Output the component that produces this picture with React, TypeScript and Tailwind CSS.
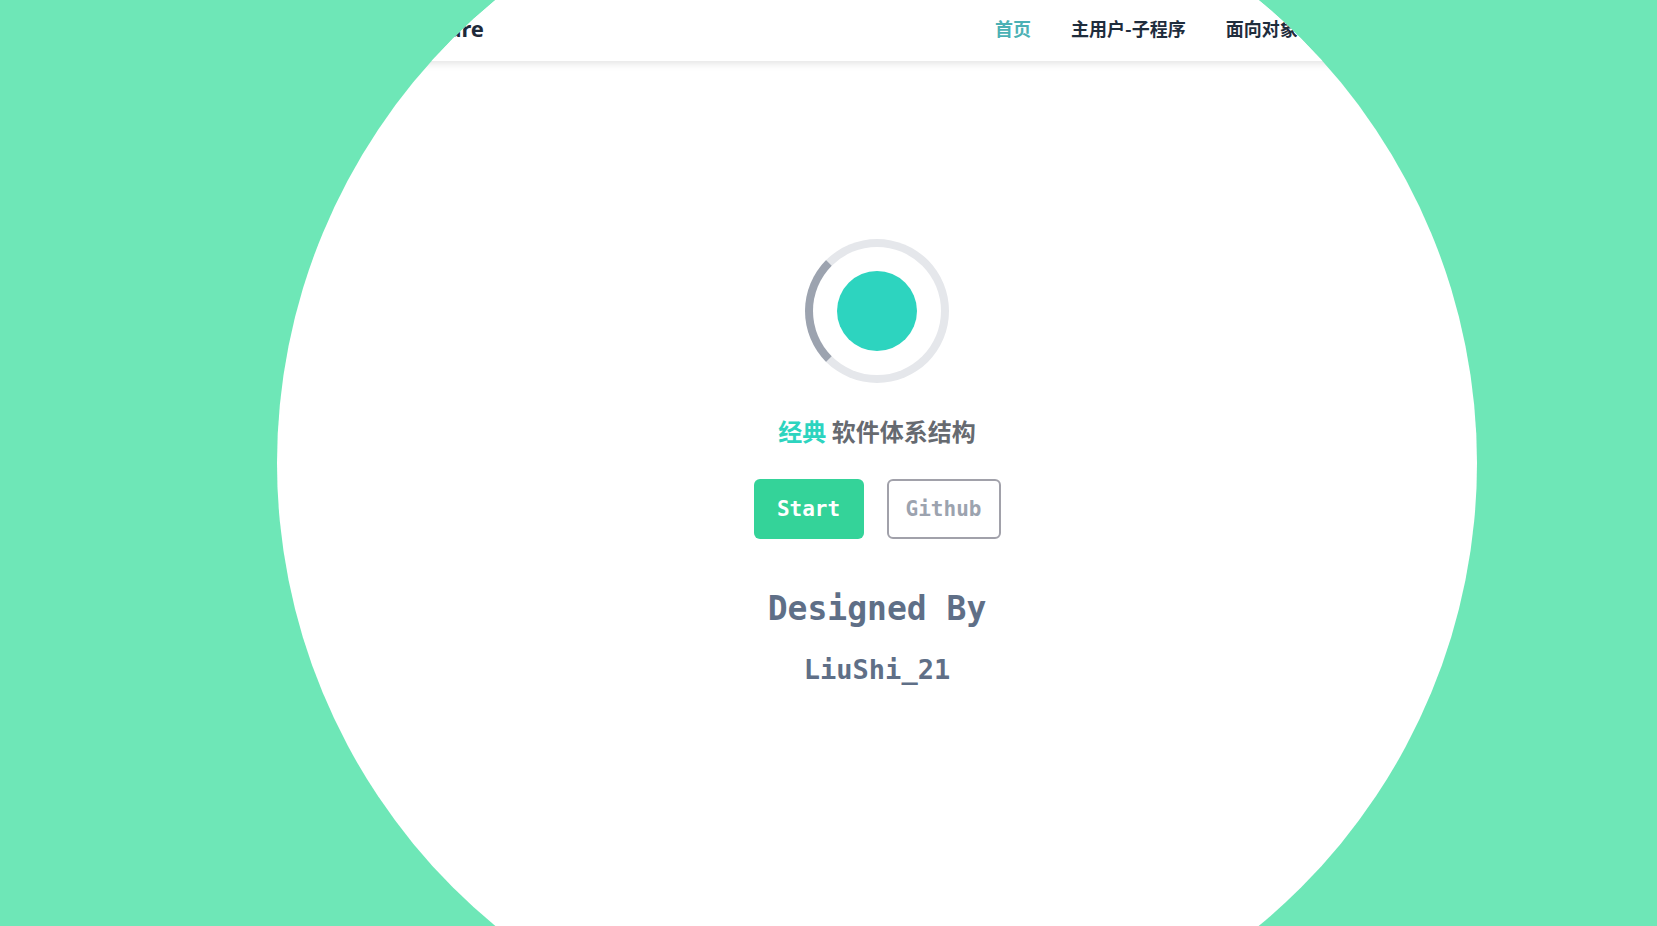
import React from "react";

// Pestañas de la barra superior
const navItems = ["首页", "主用户-子程序", "面向对象", "事件驱动", "管道-过滤器"];

export default function App() {
  return (
    <div className="relative h-[926px] w-full overflow-hidden bg-[#6ee7b7]">
      {/* página recortada por el círculo */}
      <div className="h-full w-full bg-white [clip-path:circle(600px_at_877px_463px)]">
        {/* --- HEADER --- */}
        <header className="flex h-[61px] items-center pb-[4px] bg-white shadow-[0_2px_8px_rgba(0,0,0,0.12)]">
          <div className="w-[484px] shrink-0 text-right font-['Noto_Sans',sans-serif] text-[22px] font-bold text-[#1e2a3a]">
            Software Architecture
          </div>
          <nav className="ml-[511px] flex shrink-0 items-center gap-10 whitespace-nowrap font-['Noto_Sans_CJK_SC','Noto_Sans',sans-serif] text-[18px] font-bold">
            {navItems.map((item, i) => (
              <span key={item} className={i === 0 ? "text-[#4bb1b5]" : "text-[#1f2d3d]"}>
                {item}
              </span>
            ))}
          </nav>
        </header>

        {/* --- CONTENIDO --- */}
        <main className="flex flex-col items-center pl-[97px] pt-[178px]">
          <div className="flex h-[144px] w-[144px] items-center justify-center rounded-full border-8 border-[#e5e7eb] border-l-[#9ca3af]">
            <div className="h-20 w-20 rounded-full bg-[#2dd4bf]" />
          </div>

          <h1 className="mt-[30px] font-['Noto_Sans_CJK_SC','Noto_Sans',sans-serif] text-[24px] font-bold leading-[36px] text-[#666a70]">
            <span className="text-[#2dd4bf]">经典</span> 软件体系结构
          </h1>

          <div className="mt-[30px] flex gap-[23px] font-['DejaVu_Sans_Mono',monospace] text-[21px] font-bold">
            <button className="h-[60px] w-[110px] rounded-md bg-[#34d399] pt-[2px] text-white">Start</button>
            <button className="h-[60px] w-[114px] rounded-md border-2 border-[#a1a1aa] bg-white pt-[2px] text-[#9ca3af]">
              Github
            </button>
          </div>

          <p className="mt-[50px] font-['DejaVu_Sans_Mono',monospace] text-[33px] font-bold leading-[40px] text-[#5f6f87]">
            Designed By
          </p>
          <p className="mt-[25px] font-['DejaVu_Sans_Mono',monospace] text-[27px] font-bold leading-[32px] text-[#5f6f87]">
            LiuShi_21
          </p>
        </main>
      </div>
    </div>
  );
}
